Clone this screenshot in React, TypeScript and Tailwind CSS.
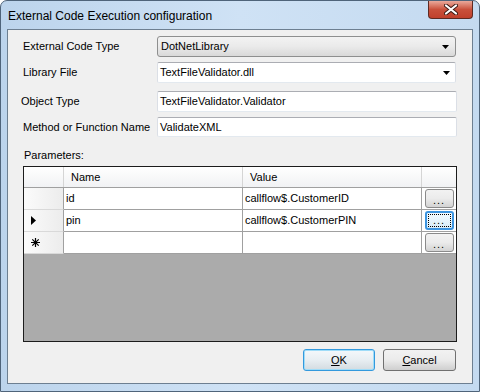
import React from "react";

const inputBox =
  "h-full border border-t-[#abadb3] border-x-[#dbdfe6] border-b-[#e3e9ef] bg-white rounded-[2px] flex items-center pl-[2px]";

const ArrowDown = () => (
  <svg width="7" height="4" viewBox="0 0 7 4" className="shrink-0">
    <path d="M0 0h7L3.5 4z" fill="#000" />
  </svg>
);

const DotsButton = ({ focused = false }: { focused?: boolean }) => (
  <div
    className={`w-[29px] h-[19px] rounded-[3px] flex items-center justify-center ${
      focused
        ? "border-2 border-[#3d95e0] bg-gradient-to-b from-[#f4fbff] to-[#d7ecf8]"
        : "border border-[#8a8a8a] bg-gradient-to-b from-[#f2f2f2] via-[#ebebeb] to-[#d3d3d3]"
    }`}
  >
    <div
      className={`flex items-end justify-center pb-[2px] ${
        focused ? "w-[23px] h-[13px] border border-dotted border-black" : "w-[25px] h-[15px]"
      }`}
    >
      <span className="text-[11px] leading-[8px] tracking-[1px]">...</span>
    </div>
  </div>
);

const rows = [
  { name: "id", value: "callflow$.CustomerID", marker: "" },
  { name: "pin", value: "callflow$.CustomerPIN", marker: "current" },
  { name: "", value: "", marker: "new" },
];

export default function App() {
  return (
    <div className="w-[480px] h-[392px] flex flex-col border border-[#4f647a] rounded-t-[7px] bg-gradient-to-r from-[#bcd4ec] via-[#cfe2f5] to-[#c4daf0] font-['Liberation_Sans',Arial,sans-serif] text-black overflow-hidden">
      {/* Title bar */}
      <div className="h-[28px] flex items-start shrink-0">
        <div className="pl-[7px] pt-[8px] text-[12px] leading-[15px]">
          External Code Execution configuration
        </div>
        <div className="ml-auto mr-[6px] w-[45px] h-[18px] rounded-b-[4px] border border-t-0 border-[#5e2a22] bg-gradient-to-b from-[#e9a99b] via-[#c9503b] to-[#c0402c] flex items-center justify-center">
          <svg width="14" height="11" viewBox="0 0 14 11">
            <path d="M2 1.5l10 8M12 1.5l-10 8" stroke="#3c1a14" strokeWidth="4" strokeLinecap="round" />
            <path d="M2 1.5l10 8M12 1.5l-10 8" stroke="#fff" strokeWidth="2.2" strokeLinecap="round" />
          </svg>
        </div>
      </div>

      {/* Client area */}
      <div className="mx-[6px] mb-[7px] flex-1 border border-[#6d7f91] bg-[#f0f0f0] flex flex-col text-[11px] leading-[13px]">
        <div className="flex items-center h-[21px] mt-[6px] pl-[15px]">
          <div className="w-[134px]">External Code Type</div>
          <div className="w-[299px] h-full rounded-[3px] border border-[#8e8f8f] bg-gradient-to-b from-[#f3f3f3] via-[#eaeaea] to-[#d9d9d9] flex items-center pl-[3px] pr-[6px]">
            <span className="flex-1">DotNetLibrary</span>
            <ArrowDown />
          </div>
        </div>

        <div className="flex items-center h-[21px] mt-[5px] pl-[15px]">
          <div className="w-[134px]">Library File</div>
          <div className={`w-[299px] ${inputBox} pr-[5px]`}>
            <span className="flex-1">TextFileValidator.dll</span>
            <ArrowDown />
          </div>
        </div>

        <div className="flex items-center h-[21px] mt-[8px] pl-[13px]">
          <div className="w-[136px]">Object Type</div>
          <div className={`w-[300px] ${inputBox}`}>TextFileValidator.Validator</div>
        </div>

        <div className="flex items-center h-[20px] mt-[5px] pl-[15px]">
          <div className="w-[134px]">Method or Function Name</div>
          <div className={`w-[300px] ${inputBox}`}>ValidateXML</div>
        </div>

        <div className="mt-[12px] pl-[16px] h-[13px]">Parameters:</div>

        {/* Data grid */}
        <div className="ml-[15px] mt-[4px] w-[434px] h-[176px] border border-[#1c1c1c] bg-[#ababab] flex flex-col">
          <div className="flex h-[21px] border-b border-[#a0a0a0] bg-gradient-to-b from-white to-[#f1f2f4]">
            <div className="w-[40px] border-r border-[#d5d5d5]" />
            <div className="w-[179px] border-r border-[#d5d5d5] pl-[7px] flex items-center">Name</div>
            <div className="w-[179px] border-r border-[#d5d5d5] pl-[7px] flex items-center">Value</div>
            <div className="flex-1" />
          </div>
          {rows.map((r) => (
            <div key={r.value + r.marker} className="flex h-[22px] bg-white">
              <div className="w-[40px] border-r border-[#a0a0a0] border-b border-b-[#d9d9d9] bg-gradient-to-r from-[#fbfbfb] to-[#ececec] flex items-center pl-[7px]">
                {r.marker === "current" && (
                  <svg width="5" height="9" viewBox="0 0 5 9">
                    <path d="M0 0l5 4.5L0 9z" fill="#000" />
                  </svg>
                )}
                {r.marker === "new" && (
                  <svg width="9" height="9" viewBox="0 0 9 9">
                    <path d="M4.5 0v9M0 4.5h9M1.3 1.3l6.4 6.4M7.7 1.3l-6.4 6.4" stroke="#000" strokeWidth="1.2" />
                  </svg>
                )}
              </div>
              <div className="w-[179px] border-r border-b border-[#a0a0a0] pl-[2px] flex items-center">{r.name}</div>
              <div className="w-[179px] border-r border-b border-[#a0a0a0] pl-[2px] flex items-center">{r.value}</div>
              <div className="flex-1 border-b border-[#a0a0a0] flex items-center justify-center">
                <DotsButton focused={r.marker === "current"} />
              </div>
            </div>
          ))}
        </div>

        <div className="flex justify-end gap-[8px] mt-[7px] pr-[16px]">
          <div className="w-[72px] h-[22px] rounded-[3px] border border-[#3399dd] shadow-[inset_0_0_0_1px_#9fdcf8] bg-gradient-to-b from-[#f4f8fb] via-[#e8eef2] to-[#d3dbe0] flex items-center justify-center">
            <span>
              <span className="underline">O</span>K
            </span>
          </div>
          <div className="w-[73px] h-[22px] rounded-[3px] border border-[#707070] bg-gradient-to-b from-[#f2f2f2] via-[#ebebeb] to-[#cfcfcf] flex items-center justify-center">
            <span>
              <span className="underline">C</span>ancel
            </span>
          </div>
        </div>
      </div>
    </div>
  );
}
